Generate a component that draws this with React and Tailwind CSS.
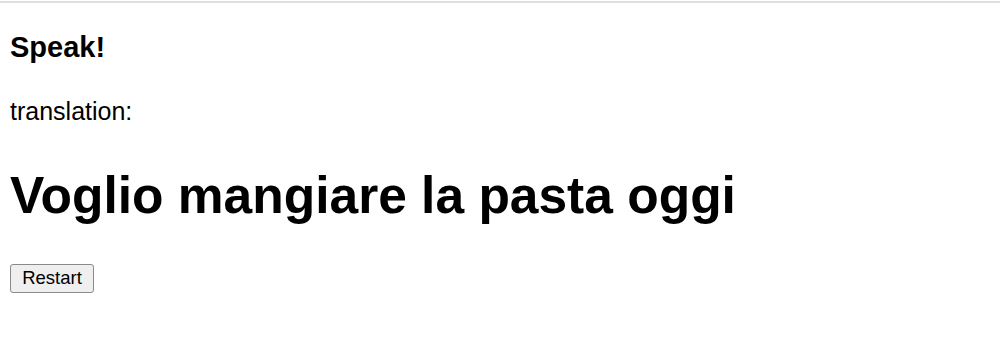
export default function App() {
  return (
    <div className="min-h-[361px] bg-white text-black" style={{ fontFamily: '"Liberation Sans", Arial, sans-serif' }}>
      <div className="h-[1px]" />
      <div className="h-[2px] bg-[#dedede]" />
      <div className="pl-[10px]">
        <h3 className="pt-[28px] text-[29px] leading-[32px] font-bold">Speak!</h3>
        <p className="mt-[34px] text-[25px] leading-[28px]">translation:</p>
        <h1 className="mt-[40px] text-[51.5px] leading-[60px] font-bold">Voglio mangiare la pasta oggi</h1>
        <button className="mt-[39px] w-[84px] h-[29px] flex items-center justify-center text-[18.5px] leading-none border border-[#8a8a8a] rounded-[3px] bg-[#efefef] text-black">
          Restart
        </button>
      </div>
    </div>
  );
}
